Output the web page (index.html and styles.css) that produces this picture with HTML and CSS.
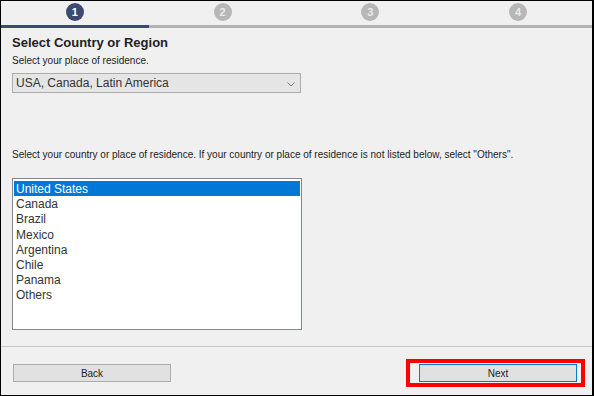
FILE: index.html
```html
<html>
<head>
<title>Select Country or Region</title>
<meta charset="utf-8">
<link rel="stylesheet" href="styles.css">
</head>
<body>
<div class="frame">

<div class="steps">
  <div class="step done"><span class="dot">1</span></div>
  <div class="step"><span class="dot">2</span></div>
  <div class="step"><span class="dot">3</span></div>
  <div class="step"><span class="dot">4</span></div>
</div>

<div class="content">
  <h1>Select Country or Region</h1>
  <p class="hint">Select your place of residence.</p>
  <div class="combo">
    <span>USA, Canada, Latin America</span>
    <svg class="chev" width="8" height="5" viewBox="0 0 8 5"><path d="M0.5 0.5 L4 4 L7.5 0.5" fill="none" stroke="#777" stroke-width="1"/></svg>
  </div>

  <p class="hint note">Select your country or place of residence. If your country or place of residence is not listed below, select "Others".</p>

  <ul class="list">
    <li class="sel">United States</li>
    <li>Canada</li>
    <li>Brazil</li>
    <li>Mexico</li>
    <li>Argentina</li>
    <li>Chile</li>
    <li>Panama</li>
    <li>Others</li>
  </ul>
</div>

<div class="footer">
  <button class="btn">Back</button>
  <div class="mark"><button class="btn next">Next</button></div>
</div>

</div>
</body>
</html>
```

FILE: styles.css
```css
body {
  margin: 0;
  font-family: "Liberation Sans", Arial, sans-serif;
  color: #1a1a1a;
}

.frame {
  width: 591px;
  height: 394px;
  border: 1px solid #000;
  border-right-width: 2px;
  background: #f0f0f0;
  display: flex;
  flex-direction: column;
  overflow: hidden;
}

/* progress */
.steps {
  display: flex;
  height: 27px;
}

.step {
  flex: 1;
  display: flex;
  justify-content: center;
  align-items: flex-start;
  padding-top: 2px;
  border-bottom: 3px solid #b3b3b3;
  box-sizing: border-box;
}

.step.done {
  border-bottom-color: #3b4a6e;
}

.dot {
  width: 18px;
  height: 18px;
  border-radius: 50%;
  background: #b7b7b7;
  color: #eaeaea;
  font-size: 11px;
  font-weight: bold;
  line-height: 18px;
  text-align: center;
}

.done .dot {
  background: #3b4a6e;
  color: #fff;
}

/* body */
.content {
  padding: 0 0 0 11px;
  height: 318px;
  border-bottom: 1px solid #c8c8c8;
}

h1 {
  font-size: 13px;
  font-weight: bold;
  color: #222;
  margin: 6px 0 0 0;
  line-height: 17px;
}

.hint {
  font-size: 10px;
  margin: 3px 0 0 0;
  line-height: 13px;
  color: #222;
}

.combo {
  box-sizing: border-box;
  width: 289px;
  height: 20px;
  margin-top: 6px;
  border: 1px solid #acacac;
  background: #e5e5e5;
  display: flex;
  align-items: center;
  justify-content: space-between;
  padding: 0 5px 0 3px;
  font-size: 12px;
  color: #333;
}

.chev {
  margin-top: 2px;
}

.note {
  margin-top: 55px;
}

.list {
  box-sizing: border-box;
  list-style: none;
  margin: 17px 0 0 0;
  padding: 2px 1px 1px 1px;
  width: 290px;
  height: 152px;
  border: 1px solid #828790;
  background: #fff;
  font-size: 12px;
}

.list li {
  height: 15.2px;
  line-height: 16px;
  padding-left: 2px;
  color: #333;
}

.list li.sel {
  background: #0078d7;
  color: #fff;
}

/* buttons */
.footer {
  display: flex;
  justify-content: space-between;
  align-items: center;
  padding: 12px 7px 0 12px;
}

.btn {
  width: 158px;
  height: 18px;
  border: 1px solid #adadad;
  background: #e1e1e1;
  font-family: "Liberation Sans", Arial, sans-serif;
  font-size: 10px;
  color: #222;
  padding: 0;
}

.next {
  border-color: #0078d7;
}

.mark {
  border: 4px solid #f00;
  padding: 1px 4px 1px 9px;
}
```
